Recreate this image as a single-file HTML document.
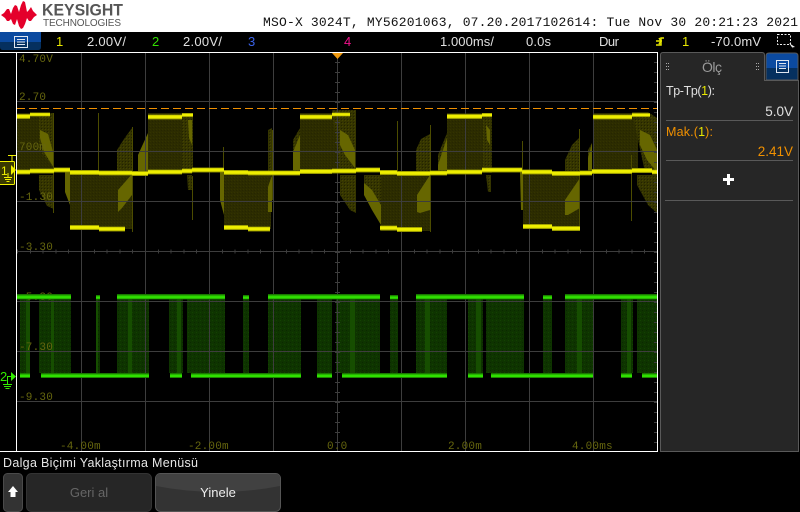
<!DOCTYPE html>
<html><head><meta charset="utf-8"><style>
html,body{margin:0;padding:0;background:#000;width:800px;height:512px;overflow:hidden}
svg{display:block}
text{font-family:"Liberation Sans",sans-serif}
.m{font-family:"Liberation Mono",monospace}
.o{font-family:"Liberation Mono",monospace;font-size:11px;fill:#66660e;letter-spacing:.2px}
.w{fill:#e0e0e0;font-size:13px}
</style></head><body>
<svg width="800" height="512" viewBox="0 0 800 512" xmlns="http://www.w3.org/2000/svg">
<defs>
<linearGradient id="blue" x1="0" y1="0" x2="0" y2="1"><stop offset="0" stop-color="#0b4aa0"/><stop offset=".55" stop-color="#0b4aa0"/><stop offset=".56" stop-color="#05305f"/><stop offset="1" stop-color="#05305f"/></linearGradient>
<linearGradient id="yb" x1="0" y1="0" x2="0" y2="1"><stop offset="0" stop-color="#6e6e00"/><stop offset=".25" stop-color="#eeee00"/><stop offset=".7" stop-color="#eeee00"/><stop offset="1" stop-color="#6e6e00"/></linearGradient>
<linearGradient id="gb" x1="0" y1="0" x2="0" y2="1"><stop offset="0" stop-color="#145c00"/><stop offset=".45" stop-color="#2fe000"/><stop offset=".75" stop-color="#2fe000"/><stop offset="1" stop-color="#0f4a00"/></linearGradient>
<pattern id="gh" width="4" height="4" patternUnits="userSpaceOnUse"><rect width="4" height="4" fill="#0e3400"/><rect width="1" height="1" fill="#124200"/><rect x="2" y="2" width="1" height="1" fill="#0a2800"/></pattern>
<pattern id="yh" width="3" height="3" patternUnits="userSpaceOnUse"><rect width="3" height="3" fill="#2c2c00"/><rect width="1" height="1" fill="#333300"/><rect x="2" y="1" width="1" height="1" fill="#262600"/></pattern>
<pattern id="yd" width="3" height="3" patternUnits="userSpaceOnUse"><rect width="3" height="3" fill="#353500"/><rect width="1" height="1" fill="#444400"/><rect x="2" y="2" width="1" height="1" fill="#222200"/></pattern>
<clipPath id="sc"><rect x="17" y="53" width="640" height="398"/></clipPath>
</defs>
<rect width="800" height="512" fill="#000"/>
<!-- header -->
<rect width="800" height="32" fill="#fff"/>
<path fill="#e4002b" d="M1 15 L4 13 L7 9 L9 9 L11 14 L13 8 L15 5 L17 6 L19 12 L21 5 L23 1 L25 2 L27 12 L29 10 L31 7 L33 11 L37 15 L34 17 L31 21 L29 21 L27 18 L25 24 L23 28 L21 29 L19 26 L17 19 L15 25 L13 24 L11 19 L9 21 L7 21 L5 18 Z"/>
<text x="42" y="15.500" font-size="16.500" font-weight="bold" fill="#565656" textLength="81" lengthAdjust="spacingAndGlyphs">KEYSIGHT</text>
<text x="43" y="26" font-size="10" fill="#565656" textLength="78">TECHNOLOGIES</text>
<text class="m" x="263" y="26" font-size="13" fill="#111" textLength="535">MSO-X 3024T, MY56201063, 07.20.2017102614: Tue Nov 30 20:21:23 2021</text>
<!-- top bar -->
<path d="M0 32H41V47Q41 50 38 50H3Q0 50 0 47Z" fill="url(#blue)"/>
<rect x="14.500" y="36.500" width="13" height="11" fill="none" stroke="#dfe6f0"/>
<path d="M17 39.500H25M17 42H25M17 44.500H25" stroke="#dfe6f0"/>
<g font-size="13">
<text x="56" y="46" fill="#e8e800">1</text>
<text class="w" x="87" y="46" textLength="39">2.00V/</text>
<text x="152" y="46" fill="#33e000">2</text>
<text class="w" x="183" y="46" textLength="39">2.00V/</text>
<text x="248" y="46" fill="#3a62e8">3</text>
<text x="344" y="46" fill="#f0108a">4</text>
<text class="w" x="440" y="46" textLength="54">1.000ms/</text>
<text class="w" x="526" y="46" textLength="25">0.0s</text>
<text class="w" x="599" y="46" textLength="20">Dur</text>
<text x="682" y="46" fill="#e8e800">1</text>
<text class="w" x="711" y="46" textLength="50">-70.0mV</text>
</g>
<path d="M656 45H661V38H664M656 41H662M659 38L661 41L659 44" fill="none" stroke="#e8e800" stroke-width="1.500"/>
<rect x="777.500" y="34.500" width="13" height="10" fill="none" stroke="#eee" stroke-dasharray="2 1.500"/>
<path d="M789 43L795 47L792 47.500L793.500 49.500Z" fill="#eee"/>
<g clip-path="url(#sc)">
<!-- yellow dim blocks -->
<g fill="url(#yh)">
<rect x="17" y="113" width="37" height="60"/>
<rect x="70" y="172" width="62" height="57"/>
<rect x="148" y="113" width="45" height="60"/>
<rect x="224" y="172" width="47" height="57"/>
<rect x="300" y="113" width="56" height="60"/>
<rect x="381" y="172" width="49" height="59"/>
<rect x="447" y="113" width="45" height="60"/>
<rect x="523" y="172" width="57" height="57"/>
<rect x="593" y="113" width="45" height="60"/>
</g>
<g fill="url(#yd)">
<path d="M39 113H54V168L39 150Z"/><path d="M39 175H54V209L47 206L39 190Z"/>
<path d="M117 150L124 139L132 128V172H117Z"/>
<path d="M182 113H193V172H182Z"/><path d="M187 175H192V190H188Z"/>
<path d="M268 130L272 128V172H268Z"/><path d="M293 140L300 128V172H293Z"/>
<path d="M332 110H356V172H340Z"/><path d="M340 175H356V213L350 210L340 195Z"/>
<path d="M364 175H381V225L370 205L364 195Z"/>
<path d="M416 150L421 139L430 134V172H416Z"/>
<path d="M438 155L447 133V172H438Z"/>
<path d="M483 113H492V172H483Z"/><path d="M486 175H491V192H488Z"/>
<path d="M565 160L572 145L580 137V172H565Z"/>
<path d="M588 150L592 143V172H588Z"/>
<path d="M632 112H648L657 118V172H645Z"/><path d="M637 175H657V213L648 205L637 185Z"/>
</g>
<!-- yellow lobes -->
<g fill="#666600">
<path d="M40 130L48 134L54 155V168L44 152L40 138Z"/>
<path d="M65 172H70V205L65 192Z"/>
<path d="M118 190L132 174V195L122 208L118 212Z"/>
<path d="M138 155L148 133V172H138Z"/>
<path d="M188 120H192V145L189 138Z"/>
<path d="M220 172H224V215L220 200Z"/>
<path d="M268 187L272 175V212H268Z"/>
<path d="M293 152L300 135V170H293Z"/>
<path d="M340 130L348 135L355 150V168L345 155L340 145Z"/>
<path d="M364 183L372 190L381 205V225L372 210L364 195Z"/>
<path d="M417 195L430 175V210L420 213L417 212Z"/>
<path d="M438 165L447 138V170H438Z"/>
<path d="M486 125L490 130V145L487 140Z"/>
<path d="M520 172H523V210H521Z"/>
<path d="M565 200L580 178V208L568 215L565 215Z"/>
<path d="M588 158L592 143V170H588Z"/>
<path d="M640 130L650 135L657 150V172L647 160L640 145Z"/>
</g>
<!-- yellow spikes -->
<g fill="#4c4c00">
<rect x="98" y="113" width="1" height="60"/><rect x="132" y="127" width="1" height="105"/>
<rect x="53" y="113" width="1" height="100"/><rect x="192" y="176" width="1" height="44"/>
<rect x="223" y="147" width="1" height="26"/><rect x="272" y="130" width="1" height="70"/>
<rect x="397" y="121" width="1" height="52"/><rect x="430" y="125" width="1" height="107"/>
<rect x="522" y="141" width="1" height="32"/><rect x="579" y="129" width="1" height="101"/>
<rect x="631" y="155" width="1" height="66"/>
</g>
<!-- green fill -->
<g fill="url(#gh)">
<rect x="20" y="299" width="10" height="74"/><rect x="39" y="299" width="32" height="74"/><rect x="96" y="299" width="4" height="74"/>
<rect x="117" y="299" width="32" height="74"/><rect x="169" y="299" width="14" height="74"/><rect x="187" y="299" width="38" height="74"/>
<rect x="243" y="299" width="6" height="74"/><rect x="268" y="299" width="33" height="74"/><rect x="317" y="299" width="15" height="74"/>
<rect x="336" y="299" width="44" height="74"/><rect x="390" y="299" width="8" height="74"/><rect x="416" y="299" width="31" height="74"/>
<rect x="468" y="299" width="15" height="74"/><rect x="486" y="299" width="38" height="74"/><rect x="543" y="299" width="9" height="74"/>
<rect x="565" y="299" width="28" height="74"/><rect x="621" y="299" width="12" height="74"/><rect x="637" y="299" width="20" height="74"/>
</g>
<g fill="#164e00">
<rect x="26" y="299" width="4" height="74"/><rect x="51" y="299" width="3" height="74"/><rect x="128" y="299" width="4" height="74"/>
<rect x="177" y="299" width="4" height="74"/><rect x="96" y="299" width="2" height="74"/><rect x="350" y="299" width="5" height="74"/>
<rect x="425" y="299" width="5" height="74"/><rect x="476" y="299" width="5" height="74"/><rect x="577" y="299" width="5" height="74"/><rect x="627" y="299" width="4" height="74"/>
</g>
</g>
<!-- grid -->
<g stroke="#3d3d3d" stroke-width="1" shape-rendering="crispEdges">
<path d="M81.500 53V451M145.500 53V451M209.500 53V451M273.500 53V451M337.500 53V451M401.500 53V451M465.500 53V451M529.500 53V451M593.500 53V451"/>
<path d="M17 101.500H657M17 151.500H657M17 201.500H657M17 251.500H657M17 301.500H657M17 351.500H657M17 401.500H657"/>
<path stroke-dasharray="1 9" stroke-width="5" d="M337.500 62V451"/>
<path stroke-dasharray="1 11.800" stroke-width="4" d="M17 251.500H657" />
<path stroke-dasharray="1 9" stroke-width="4" d="M656 62V451" />
</g>
<!-- labels -->
<text class="o" x="19" y="62">4.70V</text>
<text class="o" x="19" y="100">2.70</text>
<text class="o" x="19" y="150">700m</text>
<text class="o" x="19" y="200">-1.30</text>
<text class="o" x="19" y="250">-3.30</text>
<text class="o" x="19" y="300">-5.30</text>
<text class="o" x="19" y="350">-7.30</text>
<text class="o" x="19" y="400">-9.30</text>
<text class="o" x="60" y="449">-4.00m</text>
<text class="o" x="188" y="449">-2.00m</text>
<text class="o" x="327" y="449">0.0</text>
<text class="o" x="448" y="449">2.00m</text>
<text class="o" x="572" y="449">4.00ms</text>
<g clip-path="url(#sc)">
<!-- yellow bright traces -->
<g fill="url(#yb)">
<rect x="17" y="169.500" width="13" height="5"/><rect x="30" y="168.500" width="24" height="5"/><rect x="54" y="167.500" width="16" height="5"/>
<rect x="70" y="170" width="29" height="5"/><rect x="99" y="170.500" width="33" height="5"/><rect x="132" y="171" width="16" height="5"/>
<rect x="148" y="169.500" width="34" height="5"/><rect x="182" y="168.500" width="10" height="5"/><rect x="192" y="167.500" width="32" height="5"/>
<rect x="224" y="170" width="24" height="5"/><rect x="248" y="170.500" width="24" height="5"/><rect x="272" y="170.500" width="28" height="5"/>
<rect x="300" y="169" width="32" height="5"/><rect x="332" y="168.500" width="24" height="5"/><rect x="356" y="167.500" width="24" height="5"/>
<rect x="380" y="170" width="17" height="5"/><rect x="397" y="171" width="33" height="5"/><rect x="430" y="170.500" width="17" height="5"/>
<rect x="447" y="169.500" width="35" height="5"/><rect x="482" y="167.500" width="40" height="5"/><rect x="522" y="169.500" width="30" height="5"/>
<rect x="552" y="171" width="28" height="5"/><rect x="580" y="170.500" width="12" height="5"/><rect x="592" y="169" width="40" height="5"/>
<rect x="632" y="168" width="20" height="5"/><rect x="652" y="169.500" width="5" height="5"/>
<rect x="17" y="114" width="13" height="5"/><rect x="30" y="112.500" width="20" height="4"/>
<rect x="148" y="114.500" width="34" height="5"/><rect x="182" y="113" width="11" height="4"/>
<rect x="300" y="114.500" width="32" height="5"/><rect x="332" y="112.500" width="18" height="4"/>
<rect x="447" y="114" width="35" height="5"/><rect x="482" y="113" width="10" height="4"/>
<rect x="593" y="114.500" width="39" height="5"/><rect x="632" y="113" width="18" height="4"/>
<rect x="70" y="225" width="29" height="5"/><rect x="99" y="226.500" width="26" height="5"/>
<rect x="224" y="225" width="24" height="5"/><rect x="248" y="226.500" width="22" height="5"/>
<rect x="380" y="225.500" width="17" height="5"/><rect x="397" y="227" width="25" height="5"/>
<rect x="523" y="224" width="29" height="5"/><rect x="552" y="226" width="28" height="5"/>
</g>
<!-- trigger level -->
<path d="M17 108.500H657" stroke="#f09000" stroke-dasharray="8 4" shape-rendering="crispEdges"/>
<!-- green bands -->
<g fill="url(#gb)">
<rect x="17" y="294" width="54" height="5.500"/><rect x="96" y="295" width="4" height="4.500"/><rect x="117" y="294" width="108" height="5.500"/>
<rect x="243" y="295" width="6" height="4.500"/><rect x="268" y="294" width="112" height="5.500"/><rect x="390" y="295" width="8" height="4.500"/>
<rect x="416" y="294" width="108" height="5.500"/><rect x="543" y="295" width="9" height="4.500"/><rect x="565" y="294" width="92" height="5.500"/>
<rect x="20" y="373" width="10" height="5"/><rect x="41" y="373" width="108" height="5"/><rect x="170" y="373" width="12" height="5"/>
<rect x="191" y="373" width="110" height="5"/><rect x="317" y="373" width="15" height="5"/><rect x="342" y="373" width="105" height="5"/>
<rect x="468" y="373" width="15" height="5"/><rect x="491" y="373" width="102" height="5"/><rect x="621" y="373" width="11" height="5"/><rect x="642" y="373" width="15" height="5"/>
</g>
</g>
<!-- orange trigger pointer -->
<path d="M332 53H343L337.500 59Z" fill="#f09a10"/>
<!-- borders -->
<g fill="#fff" shape-rendering="crispEdges">
<rect x="0" y="52" width="658" height="1"/>
<rect x="16" y="52" width="1" height="400"/>
<rect x="657" y="52" width="1" height="400"/>
<rect x="0" y="451" width="658" height="1"/>
</g>
<!-- ch1 marker -->
<rect x="-1" y="161.500" width="15.500" height="23" rx="1" fill="#3a3a00" stroke="#f0f000"/>
<path d="M8 155.500H16M12 155.500V161" stroke="#f0f000" fill="none"/>
<path d="M11 165L16 170L11 175Z" fill="#f0f000"/>
<text x="1" y="175" font-size="12" fill="#f0f000">1</text>
<path d="M8 173V177M4 177.500H12M5 179.500H11M6.500 181.500H9.500" stroke="#f0f000" fill="none"/>
<!-- ch2 marker -->
<text x="0" y="381" font-size="13" fill="#33ee00">2</text>
<path d="M11 372L16 376.500L11 381Z" fill="#33ee00"/>
<path d="M11 376.500H7.500V384M3 384.500H12M4 386.500H11M5.500 388.500H9.500" stroke="#33ee00" fill="none"/>
<!-- right panel -->
<rect x="660.500" y="80.500" width="138" height="371" fill="#262626" stroke="#595959"/>
<path d="M660.500 90V55Q660.500 52.500 663 52.500H762Q764.500 52.500 764.500 55V81" fill="#262626" stroke="#595959"/>
<rect x="661" y="70" width="103" height="20" fill="#262626"/>
<rect x="765" y="80" width="33" height="1" fill="#595959"/>
<path d="M766 80V56Q766 53 769 53H795Q798 53 798 56V80Z" fill="url(#blue)" stroke="#595959"/>
<rect x="776.500" y="60.500" width="12" height="12" fill="none" stroke="#dfe6f0"/>
<path d="M779 63.500H786M779 66H786M779 68.500H786" stroke="#dfe6f0"/>
<g fill="#aaa"><rect x="666" y="63" width="1" height="1"/><rect x="668" y="63" width="1" height="1"/><rect x="666" y="66" width="1" height="1"/><rect x="668" y="66" width="1" height="1"/><rect x="666" y="69" width="1" height="1"/><rect x="668" y="69" width="1" height="1"/>
<rect x="756" y="63" width="1" height="1"/><rect x="758" y="63" width="1" height="1"/><rect x="756" y="66" width="1" height="1"/><rect x="758" y="66" width="1" height="1"/><rect x="756" y="69" width="1" height="1"/><rect x="758" y="69" width="1" height="1"/></g>
<text x="702" y="72" font-size="14" fill="#9a9a9a" textLength="20">Ölç</text>
<text x="666" y="95" font-size="12.500" fill="#e0e0e0" textLength="49">Tp-Tp(<tspan fill="#e8e800">1</tspan>):</text>
<text x="793" y="116" font-size="13.500" fill="#e0e0e0" text-anchor="end">5.0V</text>
<rect x="666" y="120" width="127" height="1" fill="#595959"/>
<text x="666" y="136" font-size="12.500" fill="#f09000" textLength="47">Mak.(<tspan fill="#e8e800">1</tspan>):</text>
<text x="793" y="156" font-size="13.500" fill="#f09000" text-anchor="end">2.41V</text>
<rect x="666" y="160" width="127" height="1" fill="#595959"/>
<path d="M723 179.500H734M728.500 174V185" stroke="#fff" stroke-width="3"/>
<rect x="665" y="200" width="128" height="1" fill="#595959"/>
<!-- softkeys -->
<text x="3" y="467" font-size="12.500" fill="#e6e6e6" textLength="195">Dalga Biçimi Yaklaştırma Menüsü</text>
<rect x="3.500" y="473.500" width="19" height="38" rx="4" fill="#333" stroke="#4a4a4a"/>
<path d="M13 486L18 492H15.500V497H10.500V492H8Z" fill="#fff"/>
<rect x="26.500" y="473.500" width="125" height="38" rx="5" fill="#262626" stroke="#333"/>
<text x="89" y="497" font-size="13" fill="#666" text-anchor="middle">Geri al</text>
<rect x="155.500" y="473.500" width="125" height="38" rx="5" fill="#333" stroke="#555"/>
<path d="M156 478Q156 474 160 474H276Q280 474 280 478V486Q218 498 156 486Z" fill="#414141"/>
<text x="218" y="497" font-size="13" fill="#eee" text-anchor="middle">Yinele</text>
</svg>
</body></html>
